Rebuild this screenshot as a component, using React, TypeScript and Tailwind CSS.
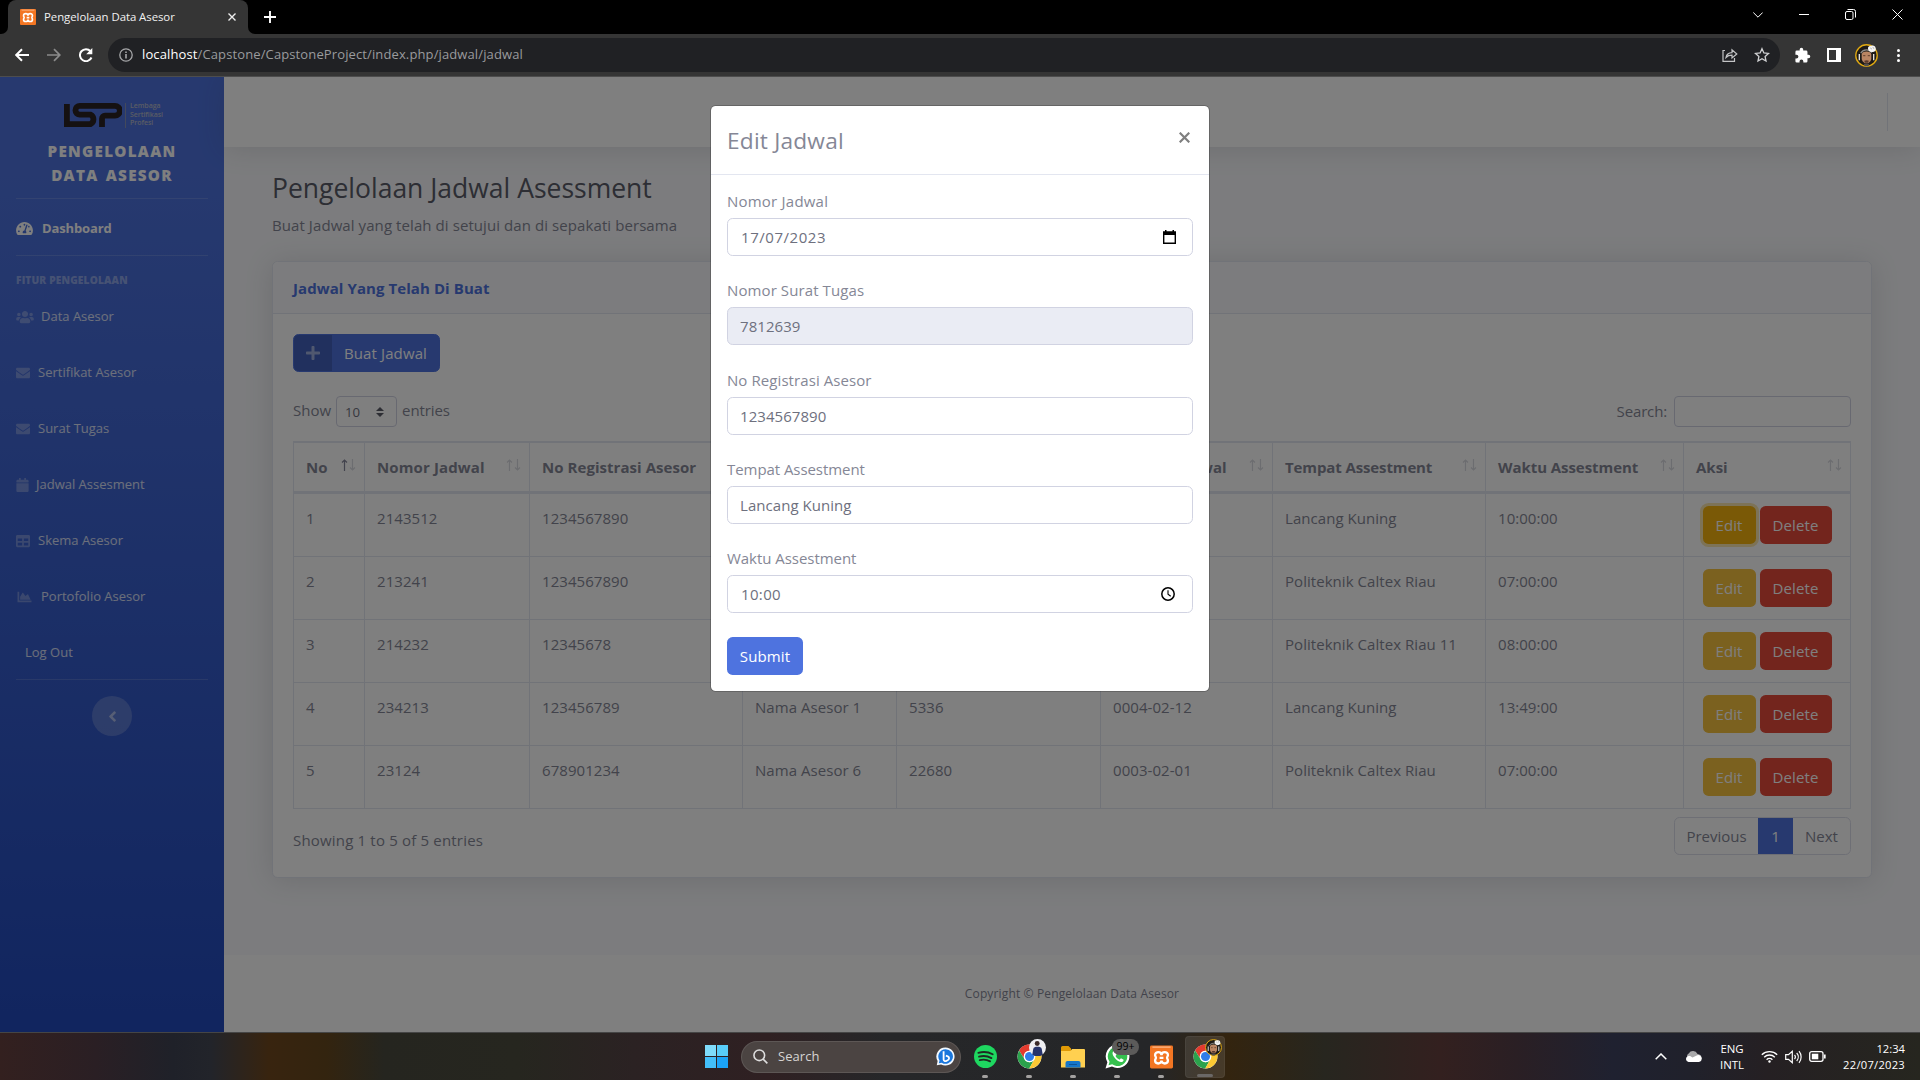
import React from "react";
import {
  FaAngleLeft,
  FaCalendar,
  FaChartArea,
  FaEnvelope,
  FaPlus,
  FaTable,
  FaTachometerAlt,
  FaUsers,
} from "react-icons/fa";

const FONT = "font-['Open_Sans','Noto_Sans',sans-serif]";

/* ---------- shared drawings ---------- */

function XamppIcon({ className }: { className: string }) {
  return (
    <svg viewBox="0 0 24 24" className={className}>
      <rect width="24" height="24" rx="1.5" fill="#f37623" />
      <rect x="2.5" y="1" width="19" height="1.4" fill="#fbb483" />
      <path
        d="M12 10.200C12 8.200 10.500 6.900 8.700 6.900S5.300 8.200 5.300 10c0 1.300.9 1.700.9 2.800s-.9 1.500-.9 2.900c0 1.800 1.500 3.100 3.300 3.100S12 17.500 12 15.700c0 1.800 1.600 3.100 3.400 3.100s3.300-1.300 3.300-3.100c0-1.400-.9-1.800-.9-2.900s.9-1.500.9-2.800c0-1.800-1.500-3.100-3.300-3.100S12 8.200 12 10.200zM10 12.900h4"
        fill="none"
        stroke="#fff"
        strokeWidth="2.400"
      />
    </svg>
  );
}

function ChromeIcon({ className }: { className: string }) {
  return (
    <svg viewBox="0 0 48 48" className={className}>
      <circle cx="24" cy="24" r="23" fill="#fff" />
      <path d="M24 13h20.200A23 23 0 0 0 4.100 12.500L14.500 29.500A11 11 0 0 1 24 13z" fill="#e33b2e" />
      <path d="M14.500 29.500L4.100 12.500A23 23 0 0 0 23.500 47L33.500 29.500a11 11 0 0 1-19 0z" fill="#2ba24c" />
      <path d="M33.500 29.500L23.500 47A23 23 0 0 0 44.200 13H24a11 11 0 0 1 9.500 16.500z" fill="#fcc934" />
      <circle cx="24" cy="24" r="11" fill="#fff" />
      <circle cx="24" cy="24" r="8.700" fill="#2f7de9" />
    </svg>
  );
}

function Avatar({ className }: { className: string }) {
  return (
    <svg viewBox="0 0 24 24" className={className}>
      <circle cx="12" cy="12" r="11.200" fill="#1d1a17" stroke="#e0a912" strokeWidth="1.400" />
      <path d="M4.500 17V10.500M19.500 17V10.500" stroke="#e9e6df" strokeWidth="1.400" />
      <path d="M6 9.500C8 5.500 15 4.500 17.500 9" stroke="#8d8b88" strokeWidth="1.300" fill="none" />
      <path d="M7 11c0-2 2-3.200 5-3.200s5 1.200 5 3.200v4c0 2.700-2.500 5-5 5s-5-2.300-5-5z" fill="#b98563" />
      <path d="M8.500 12.200h2.300M13.300 12.200h2.300" stroke="#5a3a2a" strokeWidth="1" />
      <path d="M9.500 17.500c1.500-.8 3.500-.8 5 0l-1 2h-3z" fill="#5a3a2c" />
      <path d="M9 20.500h6l-1 2.700h-4z" fill="#54504c" />
      <path d="M13.500 4.500c0-2 2-3 3.700-2.600 1.800-.9 4.300.3 4.300 2.400 1 2.700-1.200 4.400-3 4-2.300.8-5-1.300-5-3.800z" fill="#f4f4f4" />
      <path d="M16 4.200l1.500 1M18.500 3.800l1.500.7" stroke="#777" strokeWidth=".7" />
    </svg>
  );
}

/* ---------- browser chrome ---------- */

function TabStrip() {
  return (
    <div className="flex h-[34px] bg-black">
      <div className="w-[8px] bg-[#353535]">
        <div className="h-full rounded-br-[7px] bg-black" />
      </div>
      <div className="flex h-[34px] w-[240px] items-center rounded-t-[8px] bg-[#353535] pl-[12px] pr-[12px]">
        <XamppIcon className="h-[16px] w-[16px]" />
        <span className="ml-[8px] flex-1 whitespace-nowrap text-[11.400px] tracking-[-0.050px] text-[#f1f1f1]">
          Pengelolaan Data Asesor
        </span>
        <svg viewBox="0 0 8 8" className="h-[8px] w-[8px]" stroke="#eee" strokeWidth="1.400">
          <path d="M.5.5l7 7M7.500.5l-7 7" />
        </svg>
      </div>
      <div className="w-[8px] bg-[#353535]">
        <div className="h-full rounded-bl-[7px] bg-black" />
      </div>
      <div className="flex flex-1 items-center justify-between pl-[8px] pr-[17px]">
        <svg viewBox="0 0 12 12" className="h-[12px] w-[12px]" stroke="#fff" strokeWidth="1.900">
          <path d="M6 0v12M0 6h12" />
        </svg>
        <div className="flex items-center gap-[36px] pb-[5px] text-white">
          <svg viewBox="0 0 10 6" className="h-[6px] w-[10px]" stroke="currentColor" fill="none">
            <path d="M.3.5L5 5.200 9.700.5" />
          </svg>
          <div className="h-px w-[10px] bg-white" />
          <svg viewBox="0 0 11 11" className="h-[11px] w-[11px]" stroke="currentColor" fill="none">
            <rect x=".5" y="2.500" width="7.500" height="8" rx="1.500" />
            <path d="M2.500.5H8.500a2 2 0 0 1 2 2v6" />
          </svg>
          <svg viewBox="0 0 11 11" className="h-[11px] w-[11px]" stroke="currentColor" fill="none">
            <path d="M.5.5l10 10M10.500.5l-10 10" />
          </svg>
        </div>
      </div>
    </div>
  );
}

function AddressBar() {
  return (
    <div className="flex h-[43px] items-center border-b border-[#4d4d4d] bg-[#353535] pl-[15px] pr-[17px]">
      <svg viewBox="0 0 14 14" className="h-[14px] w-[14px]" stroke="#fff" strokeWidth="2" fill="none">
        <path d="M14 7H1.500M7 1.200L1.200 7 7 12.800" />
      </svg>
      <svg viewBox="0 0 14 14" className="ml-[18px] h-[14px] w-[14px]" stroke="#8b8b8b" strokeWidth="1.700" fill="none">
        <path d="M0 7h12.500M7 1.200L12.800 7 7 12.800" />
      </svg>
      <svg viewBox="0 0 14 14" className="ml-[18px] h-[14px] w-[14px]" stroke="#fff" strokeWidth="2" fill="none">
        <path d="M12.500 9.500A6 6 0 1 1 11.500 3.200" />
        <path d="M13.300 0v6.200H7.200z" fill="#fff" stroke="none" />
      </svg>
      <div className="ml-[15px] flex h-[34px] w-[1672px] items-center rounded-full bg-[#202124] pl-[11px] pr-[10px]">
        <svg viewBox="0 0 14 14" className="h-[14px] w-[14px]" stroke="#a6a7a9" strokeWidth="1.300" fill="none">
          <circle cx="7" cy="7" r="6.200" />
          <path d="M7 6v4.500M7 3.500v1.400" strokeWidth="1.600" />
        </svg>
        <span className="ml-[9px] flex-1 whitespace-nowrap text-[13px] tracking-[0.120px] text-[#9a9b9e]">
          <span className="text-white">localhost</span>/Capstone/CapstoneProject/index.php/jadwal/jadwal
        </span>
        <svg viewBox="0 0 16 14" className="h-[14px] w-[16px]" stroke="#c3c4c6" strokeWidth="1.200" fill="none">
          <path d="M3 2.500H1v10.900h11.500V10" />
          <path d="M4 9.500c.5-3 2.500-4.700 6-4.800V1.800L14.800 6 10 9.900V7.200C7.500 7.200 5.600 7.800 4 9.500z" />
        </svg>
        <svg viewBox="0 0 16 16" className="ml-[16px] h-[16px] w-[16px]" stroke="#d0d1d3" strokeWidth="1.300" fill="none">
          <path d="M8 1.700l1.900 4.200 4.600.5-3.400 3.100.9 4.500L8 11.700 4 14l.9-4.500L1.500 6.400l4.600-.5z" />
        </svg>
      </div>
      <svg viewBox="0 0 24 24" className="ml-[14px] h-[17px] w-[17px]" fill="#fff">
        <path d="M20.500 11H19V7a2 2 0 0 0-2-2h-4V3.500a2.500 2.500 0 0 0-5 0V5H4a2 2 0 0 0-2 2v3.800h1.500a2.700 2.700 0 0 1 0 5.400H2V20a2 2 0 0 0 2 2h3.800v-1.500a2.700 2.700 0 0 1 5.400 0V22H17a2 2 0 0 0 2-2v-4h1.500a2.500 2.500 0 0 0 0-5z" />
      </svg>
      <div className="ml-[16px] h-[14px] w-[14px] border-2 border-r-[5px] border-white" />
      <Avatar className="ml-[14px] h-[23px] w-[23px]" />
      <div className="ml-[19px] flex flex-col gap-[2px]">
        <div className="h-[3px] w-[3px] rounded-full bg-white" />
        <div className="h-[3px] w-[3px] rounded-full bg-white" />
        <div className="h-[3px] w-[3px] rounded-full bg-white" />
      </div>
    </div>
  );
}

/* ---------- sidebar ---------- */

function LspLogo() {
  return (
    <div className="flex h-[26px] items-center pl-[64px]">
      <svg viewBox="0 0 58 24" className="h-[24px] w-[58px]" fill="none" stroke="#2a2223" strokeWidth="5.800">
        <path d="M2.900 1v20.100H26.500a5.300 5.300 0 0 0 0-9.500H15.800a4.100 4.100 0 0 1 0-8.700H51a4.500 4.500 0 0 1 0 9.800H41a3 3 0 0 0-3 3V24" />
      </svg>
      <div className="ml-[3px] h-[25px] w-px bg-[#8793b8]" />
      <div className="ml-[4px] text-[7px] font-semibold leading-[8.500px] tracking-[-0.050px] text-[#b3b7c9]">
        <div>Lembaga</div>
        <div>Sertifikasi</div>
        <div>Profesi</div>
      </div>
    </div>
  );
}

const navItems = [
  { label: "Data Asesor", icon: <FaUsers className="h-[14px] w-[18px]" />, gap: "ml-[7px]" },
  { label: "Sertifikat Asesor", icon: <FaEnvelope className="h-[14px] w-[14px]" />, gap: "ml-[8px]" },
  { label: "Surat Tugas", icon: <FaEnvelope className="h-[14px] w-[14px]" />, gap: "ml-[8px]" },
  { label: "Jadwal Assesment", icon: <FaCalendar className="h-[14px] w-[13px]" />, gap: "ml-[7px]" },
  { label: "Skema Asesor", icon: <FaTable className="h-[14px] w-[14px]" />, gap: "ml-[8px]" },
  { label: "Portofolio Asesor", icon: <FaChartArea className="h-[14px] w-[17px]" />, gap: "ml-[8px]" },
];

function Sidebar() {
  return (
    <div className="flex h-full w-[224px] flex-col bg-linear-to-b from-[#4e73df] from-10% to-[#224abe]">
      <div className="pt-[25px]">
        <LspLogo />
      </div>
      <div className="mt-[11px] text-center text-[15.200px] font-extrabold leading-[24px] tracking-[1.300px] text-white">
        <div>PENGELOLAAN</div>
        <div className="[word-spacing:2px]">DATA ASESOR</div>
      </div>
      <div className="mx-4 mt-[11px] h-px bg-white/15" />
      <div className="flex h-[56px] items-center px-4 pt-[3px] text-white">
        <FaTachometerAlt className="h-[15px] w-[17px]" />
        <span className="ml-[9px] text-[13px] font-bold tracking-[-0.120px]">Dashboard</span>
      </div>
      <div className="mx-4 h-px bg-white/15" />
      <div className="mt-[16px] px-4 text-[10.200px] font-extrabold leading-[16px] tracking-[0.150px] text-white/40">
        FITUR PENGELOLAAN
      </div>
      <div className="mt-px">
        {navItems.map((n) => (
          <div key={n.label} className="flex h-[56px] items-center px-4 text-white/80">
            <span className="text-white/30">{n.icon}</span>
            <span className={"whitespace-nowrap text-[13px] " + n.gap}>{n.label}</span>
          </div>
        ))}
        <div className="flex h-[56px] items-center pl-[25px] text-[13px] text-white/80">Log Out</div>
      </div>
      <div className="mx-4 -mt-[2px] h-px bg-white/15" />
      <div className="mx-auto mt-[16px] flex h-[40px] w-[40px] items-center justify-center rounded-full bg-white/20 text-white/50">
        <FaAngleLeft className="h-[17px] w-[17px]" />
      </div>
    </div>
  );
}

/* ---------- main content ---------- */

const columns = [
  { label: "No", track: "tracking-normal" },
  { label: "Nomor Jadwal", track: "tracking-[0.120px]" },
  { label: "No Registrasi Asesor", track: "tracking-[0.050px]" },
  { label: "", track: "tracking-normal" },
  { label: "", track: "tracking-normal" },
  { label: "Tanggal Jadwal", track: "tracking-[0.120px]" },
  { label: "Tempat Assestment", track: "tracking-[-0.120px]" },
  { label: "Waktu Assestment", track: "tracking-[-0.060px]" },
  { label: "Aksi", track: "tracking-normal" },
];

const rows = [
  ["1", "2143512", "1234567890", "", "", "", "Lancang Kuning", "10:00:00"],
  ["2", "213241", "1234567890", "", "", "", "Politeknik Caltex Riau", "07:00:00"],
  ["3", "214232", "12345678", "", "", "", "Politeknik Caltex Riau 11", "08:00:00"],
  ["4", "234213", "123456789", "Nama Asesor 1", "5336", "0004-02-12", "Lancang Kuning", "13:49:00"],
  ["5", "23124", "678901234", "Nama Asesor 6", "22680", "0003-02-01", "Politeknik Caltex Riau", "07:00:00"],
];

const GRID = "grid grid-cols-[71px_165px_213px_154px_204px_172px_213px_198px_167px]";

function SortArrows({ active }: { active: boolean }) {
  return (
    <svg viewBox="0 0 15 12" className="mt-[16px] h-[12px] w-[15px] shrink-0" fill="none" strokeWidth="1.200">
      <path d="M3.500 12V1M1 3.500L3.500 1 6 3.500" stroke={active ? "#85869a" : "#d9dae0"} />
      <path d="M11.500 0v11M9 8.500l2.500 2.500L14 8.500" stroke="#d9dae0" />
    </svg>
  );
}

function DataTable() {
  return (
    <div className="mt-[14px] border-l border-[#e3e6f0] tracking-[0.050px]">
      <div className={GRID + " h-[53px] border-b-[3px] border-t-2 border-[#e3e6f0]"}>
        {columns.map((c, i) => (
          <div key={i} className="flex justify-between overflow-hidden border-r border-[#e3e6f0] pl-3 pr-[8px]">
            <span className={"whitespace-nowrap pt-[12px] font-bold " + c.track}>{c.label}</span>
            <SortArrows active={i === 0} />
          </div>
        ))}
      </div>
      {rows.map((r, ri) => (
        <div key={r[0]} className={GRID + " h-[63px] border-b border-[#e3e6f0]"}>
          {r.map((cell, i) => (
            <div key={i} className="whitespace-nowrap border-r border-[#e3e6f0] pl-3 pt-[12px]">
              {cell}
            </div>
          ))}
          <div className="flex justify-center gap-[4px] border-r border-[#e3e6f0] pt-[12px] text-white">
            <div
              className={
                "flex h-[38px] w-[53px] items-center justify-center rounded-[5.600px] " +
                (ri === 0 ? "bg-[#f4b30d] shadow-[0_0_0_3px_rgba(247,205,93,0.5)]" : "bg-[#f6c23e]")
              }
            >
              Edit
            </div>
            <div className="flex h-[38px] w-[72px] items-center justify-center rounded-[5.600px] bg-[#e74a3b] tracking-[0.150px]">
              Delete
            </div>
          </div>
        </div>
      ))}
    </div>
  );
}

function Main() {
  return (
    <div className="flex h-full flex-1 flex-col bg-[#f8f9fc] text-[15px] leading-[24px] text-[#858796]">
      <div className="relative flex h-[70px] shrink-0 items-center justify-end bg-white pr-[32px] shadow-[0_2px_28px_0_rgba(58,59,69,0.15)]">
        <div className="h-[38px] w-px bg-[#e3e6f0]" />
      </div>
      <div className="flex-1 px-[48px] pt-[24px]">
        <h3 className="text-[26.500px] leading-[34px] text-[#5a5c69]">Pengelolaan Jadwal Asessment</h3>
        <p className="mt-[8px] tracking-[0.080px]">Buat Jadwal yang telah di setujui dan di sepakati bersama</p>
        <div className="mt-[24px] flex h-[617px] w-[1600px] flex-col rounded-[5.600px] border border-[#e3e6f0] bg-white shadow-[0_2px_28px_0_rgba(58,59,69,0.15)]">
          <div className="h-[52px] shrink-0 rounded-t-[5.600px] border-b border-[#e3e6f0] bg-[#f8f9fc] px-5 pt-[14px] font-bold tracking-[0.080px] text-[#4e73df]">
            Jadwal Yang Telah Di Buat
          </div>
          <div className="px-5 pt-[20px]">
            <div className="flex h-[38px] w-[147px] items-center overflow-hidden rounded-[5.600px] border border-[#4e73df] bg-[#4e73df] text-white">
              <div className="flex h-full w-[38px] items-center justify-center bg-black/15 text-white/50">
                <FaPlus className="h-[16px] w-[16px]" />
              </div>
              <div className="flex-1 text-center tracking-[0.120px]">Buat Jadwal</div>
            </div>
            <div className="mt-[24px] flex h-[31px] items-center">
              <span className="pb-[3px]">Show</span>
              <div className="ml-[5px] flex h-[31px] w-[61px] items-center rounded-[4px] border border-[#d1d3e2] pl-[8px] pr-[12px] text-[13.200px] text-[#6e707e]">
                <span className="flex-1">10</span>
                <svg viewBox="0 0 8 10" className="h-[10px] w-[8px]" fill="#5a5c69">
                  <path d="M0 4l4-4 4 4zM0 6l4 4 4-4z" />
                </svg>
              </div>
              <span className="ml-[5px] flex-1 pb-[3px] tracking-[-0.100px]">entries</span>
              <span className="pb-[2px] tracking-[-0.150px]">Search:</span>
              <div className="ml-[7px] h-[31px] w-[177px] rounded-[4px] border border-[#d1d3e2] bg-white" />
            </div>
            <DataTable />
            <div className="flex justify-between">
              <span className="pt-[19px] tracking-[0.180px]">Showing 1 to 5 of 5 entries</span>
              <div className="mt-[8px] flex h-[38px] w-[177px] items-center overflow-hidden rounded-[5.600px] border border-[#dddfeb] text-center">
                <div className="w-[83px]">Previous</div>
                <div className="-my-px flex h-[38px] w-[35px] items-center justify-center bg-[#4e73df] text-white">1</div>
                <div className="flex-1">Next</div>
              </div>
            </div>
          </div>
        </div>
      </div>
      <div className="flex h-[77px] items-center justify-center bg-white text-[12px] tracking-[0.140px]">
        Copyright © Pengelolaan Data Asesor
      </div>
    </div>
  );
}

/* ---------- modal ---------- */

function Field({
  label,
  value,
  kind,
  track = "tracking-normal",
}: {
  label: string;
  value: string;
  kind?: "date" | "time" | "readonly";
  track?: string;
}) {
  return (
    <div className="h-[89.300px]">
      <div className={"h-[27px] leading-[20px] " + track}>{label}</div>
      <div
        className={
          "flex h-[38px] items-center justify-between rounded-[5.600px] border border-[#d1d3e2] pl-3 text-[#6e707e] " +
          (kind === "readonly" ? "bg-[#eaecf4]" : "bg-white")
        }
      >
        <span className={kind === "date" ? "pl-px tracking-[0.550px]" : kind === "time" ? "pl-px tracking-[0.350px]" : "tracking-[0.050px]"}>
          {value}
        </span>
        {kind === "date" && (
          <svg viewBox="0 0 13 14" className="mr-[16px] h-[14px] w-[13px]">
            <path d="M0 1.200h13V14H0zM1.400 5v7.600h10.200V5z" fillRule="evenodd" />
            <path d="M2 0h1.500v2H2zM9.500 0H11v2H9.500z" />
          </svg>
        )}
        {kind === "time" && (
          <svg viewBox="0 0 14 14" className="mr-[17px] h-[14px] w-[14px]" fill="none" stroke="#000" strokeWidth="1.500">
            <circle cx="7" cy="7" r="6.200" />
            <path d="M7 3.200V7.300l2.700 2" strokeWidth="1.100" />
          </svg>
        )}
      </div>
    </div>
  );
}

function EditModal() {
  return (
    <div className="absolute left-[710px] top-[28px] h-[587px] w-[500px] rounded-[5.600px] border border-black/20 bg-white bg-clip-padding text-[15px] leading-[24px] text-[#858796]">
      <div className="flex h-[69px] justify-between border-b border-[#e3e6f0] pl-4 pr-[19px]">
        <h5 className="pt-[17px] text-[22.700px] leading-[36px] tracking-[0.200px]">Edit Jadwal</h5>
        <svg viewBox="0 0 11 11" className="mt-[26px] h-[11px] w-[11px]" stroke="#7f7f7f" strokeWidth="2.200">
          <path d="M.7.7l9.600 9.600M10.300.7L.7 10.300" />
        </svg>
      </div>
      <div className="px-4 pt-[16px]">
        <Field label="Nomor Jadwal" value="17/07/2023" kind="date" track="tracking-[0.220px]" />
        <Field label="Nomor Surat Tugas" value="7812639" kind="readonly" track="tracking-[0.100px]" />
        <Field label="No Registrasi Asesor" value="1234567890" track="tracking-[0.080px]" />
        <Field label="Tempat Assestment" value="Lancang Kuning" track="tracking-[-0.060px]" />
        <Field label="Waktu Assestment" value="10:00" kind="time" track="tracking-[-0.040px]" />
        <button className="flex h-[38px] w-[76px] items-center justify-center rounded-[5.600px] bg-[#4e73df] tracking-[0.120px] text-white">
          Submit
        </button>
      </div>
    </div>
  );
}

/* ---------- taskbar ---------- */

function TaskItem({ children, active }: { children: React.ReactNode; active?: boolean }) {
  return (
    <div
      className={
        "relative flex h-[42px] w-[40px] items-center justify-center rounded-[4px] " +
        (active ? "border border-white/5 bg-white/10" : "")
      }
    >
      {children}
      <div
        className={
          "absolute bottom-0 h-[3px] rounded-full " + (active ? "w-[16px] bg-[#6b6866]" : "w-[6px] bg-[#a3a1a0]")
        }
      />
    </div>
  );
}

function Taskbar() {
  return (
    <div className="flex h-[48px] items-center border-t border-[#454545] bg-[linear-gradient(90deg,#33201f_0%,#2a1f24_5%,#1f2129_9%,#22242a_11%,#38240f_14%,#33240f_17%,#25251f_20%,#26261f_27%,#2b2223_33%,#2f2022_40%,#262729_46%,#252628_60%,#33240f_64%,#27261f_69%,#33201f_75%,#2a1f24_79%,#1f2130_84%,#20212b_88%,#252023_92%,#26261f_100%)] pl-[705px] pr-[15px]">
      <div className="grid h-[23px] w-[23px] grid-cols-2 gap-px">
        <div className="bg-[#7fdcfb]" />
        <div className="bg-[#58cdf9]" />
        <div className="bg-[#43bffa]" />
        <div className="bg-[#1ba3f7]" />
      </div>
      <div className="ml-[13px] flex h-[32px] w-[220px] items-center rounded-full border border-white/10 bg-[#4b4442] pl-[11px] pr-[5px]">
        <svg viewBox="0 0 16 16" className="h-[15px] w-[15px]" fill="none" stroke="#dedede" strokeWidth="1.700">
          <circle cx="6.700" cy="6.700" r="5.700" />
          <path d="M10.800 10.800L15.300 15.300" />
        </svg>
        <span className="ml-[10px] flex-1 text-[13px] tracking-[0.050px] text-[#d6d4d3]">Search</span>
        <svg viewBox="0 0 20 20" className="h-[19px] w-[19px]">
          <path d="M10 .5a9.500 9.500 0 1 1-4.600 17.800L.8 19.300l.9-4.500A9.500 9.500 0 0 1 10 .5z" fill="#f3f9ff" />
          <path d="M10 2.300a7.700 7.700 0 1 1-4 14.200l-3 .6.700-2.900A7.700 7.700 0 0 1 10 2.300z" fill="#1a77dd" />
          <path d="M8 4.500v8.600a1.900 1.900 0 0 0 2.800 1.600l1.800-1c1.700-1 1.500-3.200-.2-3.900l-2-.7" fill="none" stroke="#fff" strokeWidth="1.900" />
        </svg>
      </div>
      <div className="ml-[4px] flex items-center gap-[4px]">
        <TaskItem>
          <svg viewBox="0 0 24 24" className="h-[23px] w-[23px]">
            <circle cx="12" cy="12" r="12" fill="#1ed760" />
            <path d="M4.500 8.200c5-1.500 10.500-1 15 1.500M5.200 12.200c4.500-1.300 9-.800 13 1.500M6 15.800c3.700-1 7.500-.6 10.800 1.300" fill="none" stroke="#1f2a22" strokeWidth="1.900" strokeLinecap="round" />
          </svg>
        </TaskItem>
        <TaskItem>
          <ChromeIcon className="h-[25px] w-[25px]" />
          <svg viewBox="0 0 18 18" className="absolute right-[3px] top-[3px] h-[17px] w-[17px]">
            <circle cx="9" cy="9" r="9" fill="#efeff2" />
            <path d="M3.500 16.500l1-6c.5-2 2-2.300 4.500-2.300s4 .3 4.500 2.300l1 6A9 9 0 0 1 3.500 16.500z" fill="#27346b" />
            <circle cx="8.700" cy="4.700" r="2.600" fill="#3b2a29" />
          </svg>
        </TaskItem>
        <TaskItem>
          <svg viewBox="0 0 24 24" className="h-[24px] w-[24px]">
            <path d="M0 2.500A1.500 1.500 0 0 1 1.500 1h6L10 3.500V8H0z" fill="#e09a06" />
            <path d="M0 6h9.500l1.500-2h12a1 1 0 0 1 1 1v17.500H0z" fill="#ffd050" />
            <path d="M4.500 22.500V18a2 2 0 0 1 2-2h11a2 2 0 0 1 2 2v4.500z" fill="#1676c9" />
            <path d="M8 19.500h8" stroke="#0d5598" />
          </svg>
        </TaskItem>
        <TaskItem>
          <svg viewBox="0 0 24 24" className="h-[25px] w-[25px]">
            <path d="M12.200.5a11.300 11.300 0 1 1-5.500 21.200L.5 23.500l1.800-6A11.300 11.300 0 0 1 12.200.5z" fill="#fff" />
            <path d="M12.200 2.500a9.300 9.300 0 1 1-5.300 17l-3.500 1 1-3.400a9.300 9.300 0 0 1 7.800-14.600z" fill="#35c04e" />
            <path d="M8.300 6.800c-1.700 1.300-1.300 3.400.4 5.700 2 2.700 4.200 4.400 6.500 4.700 1.400.1 2.700-.8 2.700-2.200l-2.600-1.300-1.200 1.300c-1.700-.7-3.200-2-4-3.600l1-1.300-1.200-2.800z" fill="#fff" />
          </svg>
          <div className="absolute -right-[2px] top-[3px] flex h-[16px] w-[27px] items-center justify-center rounded-full bg-[#5c5b5a] text-[10.500px] text-black">
            99+
          </div>
        </TaskItem>
        <TaskItem>
          <XamppIcon className="h-[24px] w-[23px]" />
        </TaskItem>
        <TaskItem active>
          <ChromeIcon className="h-[25px] w-[25px]" />
          <Avatar className="absolute right-[2px] top-[2px] h-[17px] w-[17px]" />
        </TaskItem>
      </div>
      <div className="flex flex-1 items-center justify-end text-white">
        <svg viewBox="0 0 12 7" className="h-[7px] w-[12px]" fill="none" stroke="currentColor" strokeWidth="1.500">
          <path d="M.7 6.200L6 1l5.300 5.200" />
        </svg>
        <svg viewBox="0 0 17 11" className="ml-[18px] h-[11px] w-[17px]">
          <path d="M3 8a3.500 3.500 0 0 1 .7-5.500A5 5 0 0 1 12.500 3 4 4 0 0 1 16.500 8z" fill="#a9a9ab" />
          <path d="M3.500 11a3 3 0 0 1-.5-5.800c2-.6 3 .3 4.500 1.200l4.800-2.200A3.500 3.500 0 0 1 14 11z" fill="#fff" />
        </svg>
        <div className="ml-[17px] w-[26px] text-center text-[11.400px] leading-[16px]">
          <div>ENG</div>
          <div>INTL</div>
        </div>
        <svg viewBox="0 0 17 13" className="ml-[16px] h-[13px] w-[17px]" fill="none" stroke="currentColor" strokeWidth="1.300">
          <path d="M.8 4.700a11 11 0 0 1 15.400 0M3.200 7.200a7.500 7.500 0 0 1 10.600 0M5.600 9.700a4 4 0 0 1 5.800 0" />
          <circle cx="8.500" cy="11.500" r="1.200" fill="currentColor" stroke="none" />
        </svg>
        <svg viewBox="0 0 17 14" className="ml-[7px] h-[14px] w-[17px]" fill="none" stroke="currentColor" strokeWidth="1.200">
          <path d="M.7 4.700h2.800L7.300 1.300v11.400L3.500 9.300H.7zM9.500 5a3 3 0 0 1 0 4M11.700 3a6 6 0 0 1 0 8M14 1.200a9 9 0 0 1 0 11.600" />
        </svg>
        <svg viewBox="0 0 17 11" className="ml-[7px] h-[11px] w-[17px]" fill="none" stroke="currentColor" strokeWidth="1.300">
          <rect x=".7" y=".7" width="13.300" height="9.600" rx="2" />
          <rect x="2.800" y="2.700" width="6.500" height="5.600" fill="currentColor" stroke="none" />
          <path d="M15.800 3.500v4" strokeWidth="1.700" />
        </svg>
        <div className="ml-[16px] w-[63px] whitespace-nowrap text-right text-[11.200px] leading-[16px]">
          <div>12:34</div>
          <div className="tracking-[0.250px]">22/07/2023</div>
        </div>
      </div>
    </div>
  );
}

export default function App() {
  return (
    <div className={"h-[1080px] w-[1920px] overflow-hidden " + FONT}>
      <TabStrip />
      <AddressBar />
      <div className="relative flex h-[955px] overflow-hidden">
        <Sidebar />
        <Main />
        <div className="absolute inset-0 bg-black/50" />
        <EditModal />
      </div>
      <Taskbar />
    </div>
  );
}
